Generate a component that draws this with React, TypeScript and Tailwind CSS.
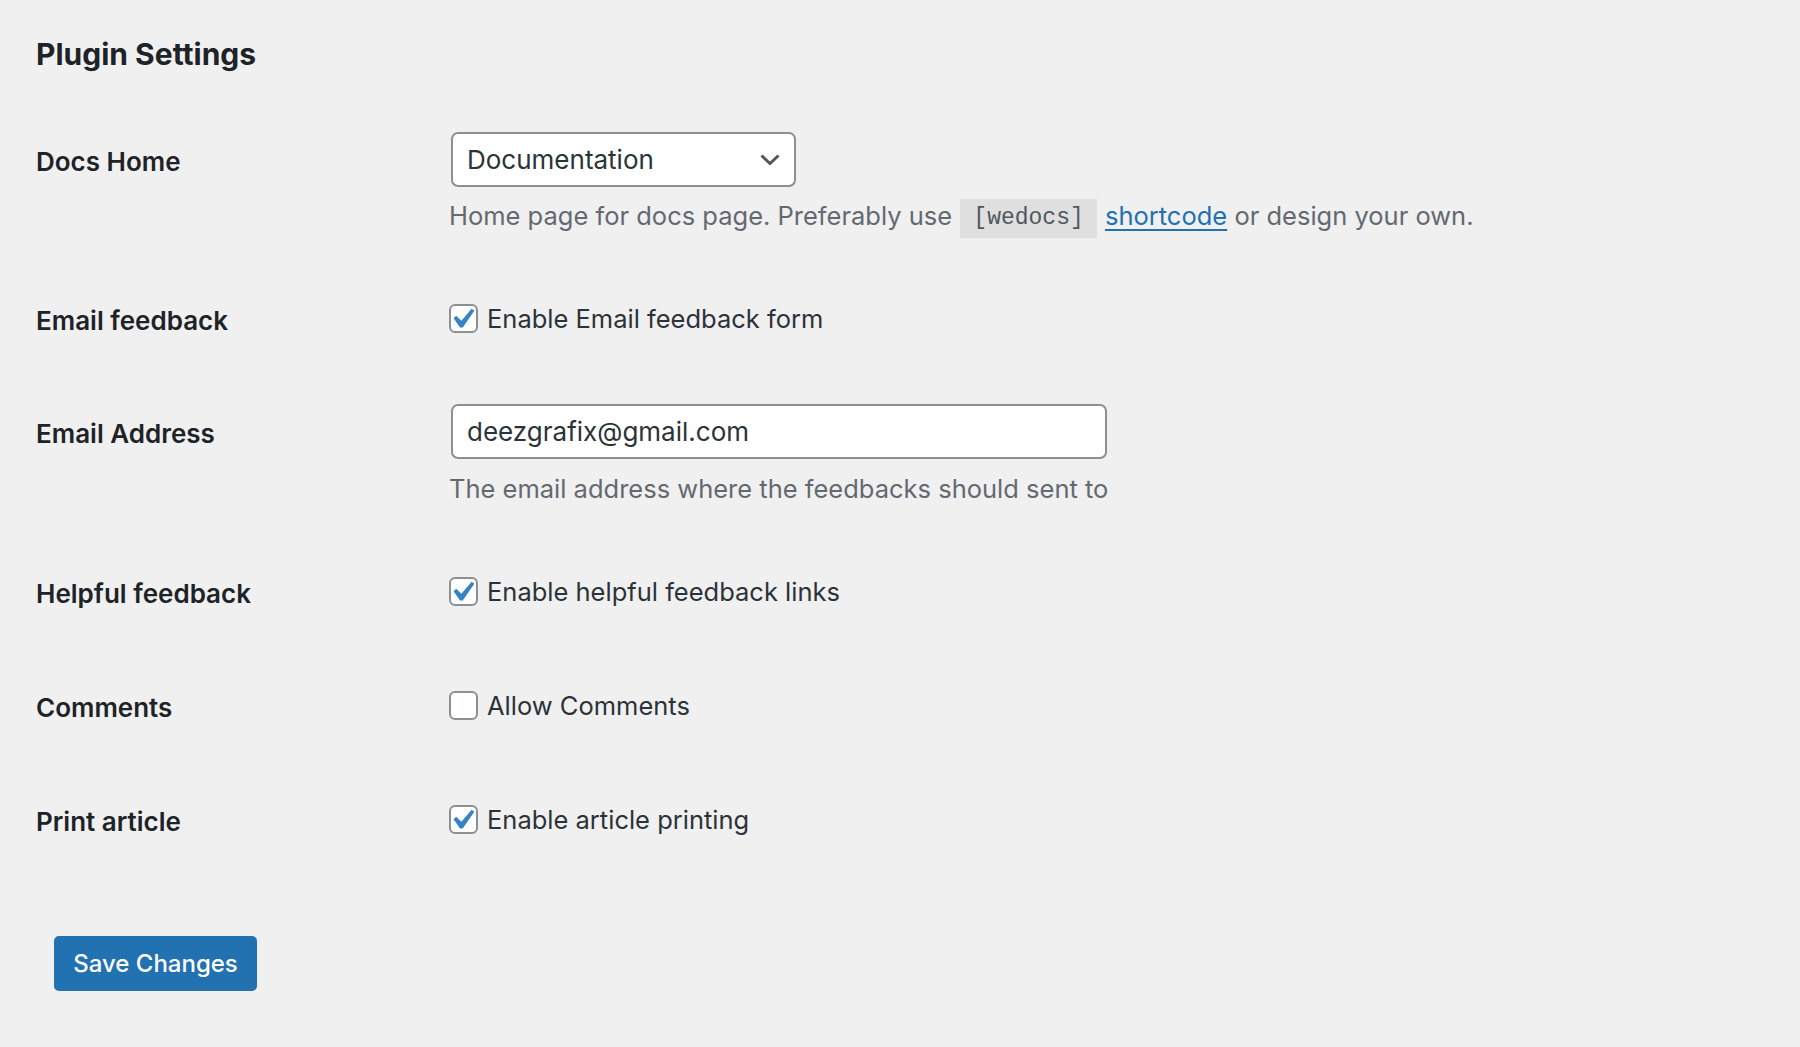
import React from "react";

const font = { fontFamily: "Inter, 'Noto Sans', sans-serif" };

function Check({ checked, label }: { checked: boolean; label: string }) {
  return (
    <label className="flex h-[40px] items-center">
      <span className="flex h-[29px] w-[29px] items-center justify-center overflow-visible rounded-[6px] border-2 border-[#8c8f94] bg-white">
        {checked && (
          <svg viewBox="0 0 20 20" className="ml-[-4px] mt-[1px] h-[40px] w-[40px] shrink-0 overflow-visible">
            <path d="M14.83 4.89l1.34.94-5.81 8.38H9.02L5.78 9.67l1.34-1.25 2.57 2.4z" fill="#3582c4" />
          </svg>
        )}
      </span>
      <span className="ml-[9px] text-[25.5px] leading-[40px] text-[#2c3338]">{label}</span>
    </label>
  );
}

function Label({ children }: { children: React.ReactNode }) {
  return <div className="w-[413px] shrink-0 pt-[5px] text-[26px] font-semibold leading-[40px] text-[#1d2327]">{children}</div>;
}

export default function App() {
  return (
    <div className="min-h-[1047px] w-full bg-[#f0f0f1] pl-[36px]" style={font}>
      <div className="pt-[36px] text-[30px] font-bold leading-[36px] text-[#1d2327]">Plugin Settings</div>

      {/* Docs Home */}
      <div className="mt-[60px] flex items-center">
        <Label>Docs Home</Label>
        <div className="ml-[2px] flex h-[55px] w-[345px] items-center justify-between rounded-[7px] border-2 border-[#8c8f94] bg-white pl-[14px] pr-[14px]">
          <span className="text-[26px] text-[#2c3338]">Documentation</span>
          <svg viewBox="0 0 20 11" className="h-[11px] w-[20px]">
            <path d="M1.5 1.5 L10 9.5 L18.5 1.5" fill="none" stroke="#50575e" strokeWidth="3" />
          </svg>
        </div>
      </div>
      <div className="mt-[12px] flex">
        <div className="w-[413px] shrink-0" />
        <p className="text-[25.5px] leading-[32px] text-[#646970]">
          Home page for docs page. Preferably use{" "}
          <code
            className="mx-[1px] inline-block rounded-[1px] bg-[#dfdfe0] px-[13px] text-[23px] leading-[39px] text-[#50575e] align-middle"
            style={{ fontFamily: "'Liberation Mono', monospace" }}
          >
            [wedocs]
          </code>{" "}
          <a className="text-[#2271b1] underline underline-offset-[4px]">shortcode</a> or design your own.
        </p>
      </div>

      {/* Email feedback */}
      <div className="mt-[58px] flex items-center">
        <Label>Email feedback</Label>
        <Check checked label="Enable Email feedback form" />
      </div>

      {/* Email Address */}
      <div className="mt-[63px] flex items-center">
        <Label>Email Address</Label>
        <div className="ml-[2px] flex h-[55px] w-[656px] items-center rounded-[7px] border-2 border-[#8c8f94] bg-white pl-[14px]">
          <span className="text-[26px] text-[#2c3338]">deezgrafix@gmail.com</span>
        </div>
      </div>
      <div className="mt-[14px] flex">
        <div className="w-[413px] shrink-0" />
        <p className="text-[25.5px] leading-[32px] text-[#646970]">The email address where the feedbacks should sent to</p>
      </div>

      {/* Helpful */}
      <div className="mt-[64px] flex items-center">
        <Label>Helpful feedback</Label>
        <Check checked label="Enable helpful feedback links" />
      </div>

      <div className="mt-[69px] flex items-center">
        <Label>Comments</Label>
        <Check checked={false} label="Allow Comments" />
      </div>

      <div className="mt-[69px] flex items-center">
        <Label>Print article</Label>
        <Check checked label="Enable article printing" />
      </div>

      <div className="ml-[18px] mt-[94px]">
        <button className="h-[55px] w-[203px] rounded-[5px] bg-[#2271b1] text-[24px] font-medium text-white">
          Save Changes
        </button>
      </div>
    </div>
  );
}
